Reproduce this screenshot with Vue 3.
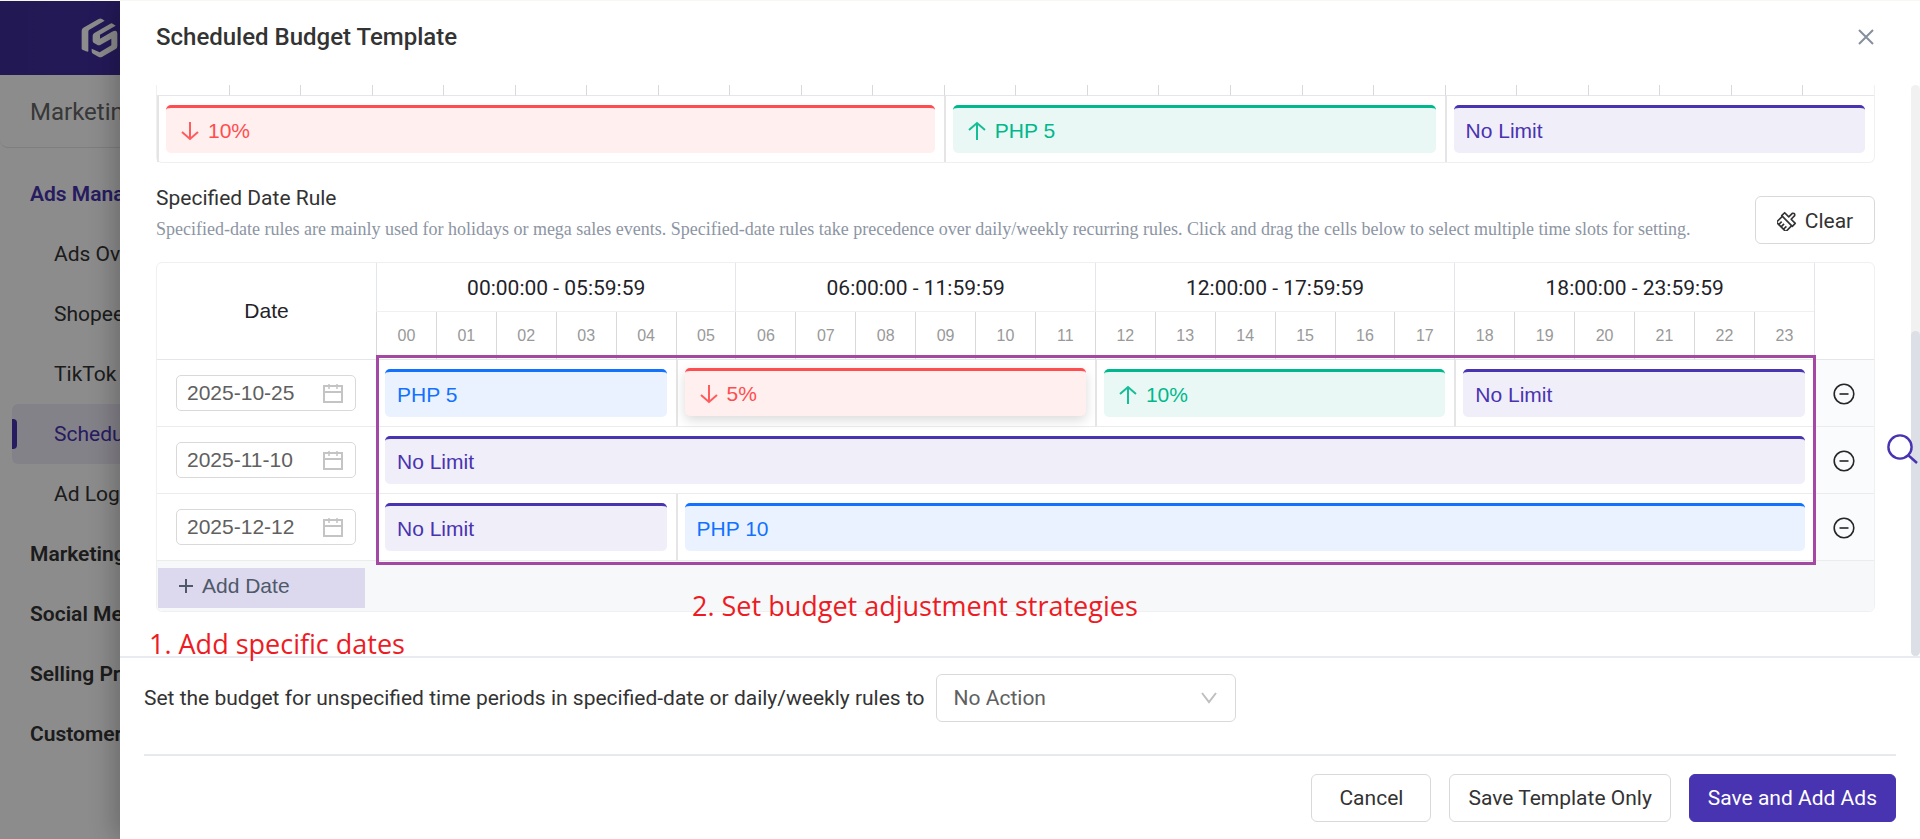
<script setup>
import { ref } from 'vue';

const menu = [
  { label: 'Ads Management', group: true, current: true },
  { label: 'Ads Overview' },
  { label: 'Shopee Ads' },
  { label: 'TikTok Ads' },
  { label: 'Scheduled Budget', active: true },
  { label: 'Ad Logs' },
  { label: 'Marketing Tools', group: true },
  { label: 'Social Media', group: true },
  { label: 'Selling Price', group: true },
  { label: 'Customer Service', group: true }
];

const ranges = [
  '00:00:00 - 05:59:59',
  '06:00:00 - 11:59:59',
  '12:00:00 - 17:59:59',
  '18:00:00 - 23:59:59'
];

const hours = Array.from({ length: 24 }, (_, i) => String(i).padStart(2, '0'));

const dailySlots = [
  { span: 11, type: 'down', text: '10%' },
  { span: 7, type: 'up', text: 'PHP 5' },
  { span: 6, type: 'unlimited', text: 'No Limit' }
];

const dateRules = ref([
  {
    date: '2025-10-25',
    slots: [
      { span: 5, type: 'fixed', text: 'PHP 5' },
      { span: 7, type: 'down', text: '5%', raised: true },
      { span: 6, type: 'up', text: '10%' },
      { span: 6, type: 'unlimited', text: 'No Limit' }
    ]
  },
  {
    date: '2025-11-10',
    slots: [{ span: 24, type: 'unlimited', text: 'No Limit' }]
  },
  {
    date: '2025-12-12',
    slots: [
      { span: 5, type: 'unlimited', text: 'No Limit' },
      { span: 19, type: 'fixed', text: 'PHP 10' }
    ]
  }
]);

const fallback = ref('none');

const addDate = () => {
  dateRules.value.push({
    date: '',
    slots: [{ span: 24, type: 'unlimited', text: 'No Limit' }]
  });
};

const removeDate = (index) => {
  dateRules.value.splice(index, 1);
};
</script>

<template>
  <div class="page">
    <aside class="sidebar">
      <div class="brand">
        <svg class="logo" viewBox="0 0 120 120" fill="#fff">
          <path d="M5 92V38Q5 32 10 29L56 3Q61 0 66 3L74 8L28 35Q25 37 25 41V100Q23 102 18 100L9 96Q5 95 5 92Z" />
          <path d="M43 45L91 17Q94 15 98 17L107 23L60 50V62L96 41Q112 33 112 46V83Q112 90 107 93L67 116Q61 119 55 116L39 107Q35 105 35 100V92L59 103L94 82V62L62 80Q56 83 51 80L42 75Q38 73 38 68V53Q38 48 43 45Z" />
        </svg>
      </div>
      <div class="module">Marketing</div>
      <nav class="menu">
        <a
          v-for="item in menu"
          :key="item.label"
          href="#"
          :class="{ group: item.group, current: item.current, active: item.active }"
        >{{ item.label }}</a>
      </nav>
    </aside>
    <div class="mask"></div>

    <section class="drawer" role="dialog" aria-labelledby="drawer-title">
      <header class="drawer-head">
        <h1 id="drawer-title">Scheduled Budget Template</h1>
        <button type="button" class="icon-btn close" aria-label="Close">
          <svg width="18" height="18" viewBox="0 0 18 18" stroke="#86909c" stroke-width="2">
            <path d="M2 2l14 14M16 2L2 16" />
          </svg>
        </button>
      </header>

      <div class="drawer-body">
        <div class="grid-box daily">
          <table>
            <thead>
              <tr>
                <th v-for="hour in hours" :key="hour" :aria-label="hour"></th>
              </tr>
            </thead>
            <tbody>
              <tr>
                <td v-for="(slot, i) in dailySlots" :key="i" :colspan="slot.span" class="slot">
                  <div class="tag" :class="slot.type">
                    <svg v-if="slot.type === 'down'" class="arrow" viewBox="0 0 24 24">
                      <path d="M12 3v17M4 13l8 7 8-7" />
                    </svg>
                    <svg v-if="slot.type === 'up'" class="arrow" viewBox="0 0 24 24">
                      <path d="M12 21V4M4 11l8-7 8 7" />
                    </svg>
                    <span>{{ slot.text }}</span>
                  </div>
                </td>
              </tr>
            </tbody>
          </table>
        </div>

        <div class="rule-head">
          <div>
            <h2>Specified Date Rule</h2>
            <p>Specified-date rules are mainly used for holidays or mega sales events. Specified-date rules take precedence over daily/weekly recurring rules. Click and drag the cells below to select multiple time slots for setting.</p>
          </div>
          <button type="button" class="btn clear">
            <svg width="20" height="20" viewBox="0 0 24 24" fill="none" stroke="currentColor" stroke-width="2" stroke-linejoin="round">
              <g transform="rotate(45 12 12)">
                <path d="M10 1Q12 -2 14 1V7H21V12H3V7H10Z" />
                <path d="M4 12V22H20V12M8 22V17M12 22V17M16 22V17" />
              </g>
            </svg>
            Clear
          </button>
        </div>

        <div class="grid-box dates">
          <table>
            <colgroup>
              <col class="col-date" />
              <col v-for="hour in hours" :key="hour" />
              <col class="col-action" />
            </colgroup>
            <thead>
              <tr class="ranges">
                <th rowspan="2" class="date-title">Date</th>
                <th v-for="range in ranges" :key="range" colspan="6">{{ range }}</th>
                <th rowspan="2" class="action-title"></th>
              </tr>
              <tr class="hours">
                <th v-for="hour in hours" :key="hour">{{ hour }}</th>
              </tr>
            </thead>
            <tbody>
              <tr v-for="(rule, index) in dateRules" :key="index">
                <td class="date-cell">
                  <label class="date-input">
                    <input v-model="rule.date" type="text" aria-label="Date" />
                    <svg width="20" height="20" viewBox="0 0 20 20" fill="none" stroke="#c4c4c4" stroke-width="2">
                      <path d="M1 3H19V19H1ZM1 9H19" />
                      <path d="M6 1V6M14 1V6" stroke-width="1.5" />
                    </svg>
                  </label>
                </td>
                <td v-for="(slot, i) in rule.slots" :key="i" :colspan="slot.span" class="slot">
                  <div class="tag" :class="[slot.type, { raised: slot.raised }]">
                    <svg v-if="slot.type === 'down'" class="arrow" viewBox="0 0 24 24">
                      <path d="M12 3v17M4 13l8 7 8-7" />
                    </svg>
                    <svg v-if="slot.type === 'up'" class="arrow" viewBox="0 0 24 24">
                      <path d="M12 21V4M4 11l8-7 8 7" />
                    </svg>
                    <span>{{ slot.text }}</span>
                  </div>
                </td>
                <td class="action-cell">
                  <button type="button" class="icon-btn" aria-label="Remove date" @click="removeDate(index)">
                    <svg width="22" height="22" viewBox="0 0 22 22" fill="none" stroke="#262626" stroke-width="1.6">
                      <circle cx="11" cy="11" r="9.8" />
                      <path d="M6.5 11h9" />
                    </svg>
                  </button>
                </td>
              </tr>
            </tbody>
          </table>
          <div class="add-row">
            <button type="button" @click="addDate">
              <svg width="16" height="16" viewBox="0 0 16 16" stroke="currentColor" stroke-width="2">
                <path d="M8 1V15M1 8H15" />
              </svg>
              Add Date
            </button>
          </div>
          <div class="highlight"></div>
        </div>
        <div class="scrollbar"><div class="thumb"></div></div>
      </div>

      <footer class="drawer-foot">
        <div class="fallback">
          <label for="fallback">Set the budget for unspecified time periods in specified-date or daily/weekly rules to</label>
          <div class="select">
            <select id="fallback" v-model="fallback">
              <option value="none">No Action</option>
            </select>
            <svg width="16" height="12" viewBox="0 0 16 12" fill="none" stroke="#bfbfbf" stroke-width="2">
              <path d="M1 1l7 9 7-9" />
            </svg>
          </div>
        </div>
        <div class="actions">
          <button type="button" class="btn cancel">Cancel</button>
          <button type="button" class="btn">Save Template Only</button>
          <button type="button" class="btn primary">Save and Add Ads</button>
        </div>
        <span class="note note-dates">1. Add specific dates</span>
        <span class="note note-budget">2. Set budget adjustment strategies</span>
      </footer>
    </section>

    <button type="button" class="icon-btn search" aria-label="Search">
      <svg width="32" height="32" viewBox="0 0 32 32" fill="none" stroke="#4833b0" stroke-width="2.4">
        <circle cx="14" cy="14" r="11.6" />
        <path d="M22 22l9 8" />
      </svg>
    </button>
  </div>
</template>

<style>
body {
  overflow: hidden;
}
</style>

<style scoped>
.page {
  position: relative;
  box-sizing: border-box;
  height: 100vh;
  border-top: 1px solid #f7f8f3;
  overflow: hidden;
  background: #fff;
  color: #333;
  font-family: Roboto, "Liberation Sans", sans-serif;
  font-size: 21px;
  line-height: 30px;
}

.page *,
.page *::before {
  box-sizing: border-box;
}

button,
input,
select {
  font: inherit;
  color: inherit;
}

/* app shell behind the drawer */
.sidebar {
  width: 320px;
  height: 100%;
}

.brand {
  height: 74px;
  padding: 17px 80px;
  background: linear-gradient(90deg, #3f2d99, #4833b0);
}

.logo {
  display: block;
  width: 40px;
  height: 40px;
}

.module {
  height: 73px;
  padding: 0 30px;
  border-bottom: 1px solid #e5e6eb;
  border-radius: 0 0 0 8px;
  color: #666;
  font-size: 24px;
  line-height: 74px;
}

.menu {
  display: flex;
  flex-direction: column;
  padding: 16px 12px;
}

.menu a {
  height: 60px;
  padding-left: 42px;
  border-radius: 6px;
  color: #333;
  line-height: 60px;
  text-decoration: none;
}

.menu a.group {
  padding-left: 18px;
  font-weight: 600;
}

.menu a.current {
  color: #4833b0;
}

.menu a.active {
  position: relative;
  background: #f0edf9;
  color: #4833b0;
}

.menu a.active::before {
  content: "";
  position: absolute;
  left: 0;
  top: 15px;
  width: 5px;
  height: 30px;
  border-radius: 0 4px 4px 0;
  background: #4833b0;
}

.mask {
  position: absolute;
  inset: 0;
  background: rgba(0, 0, 0, 0.45);
}

/* drawer */
.drawer {
  position: absolute;
  inset: 0 0 0 120px;
  display: flex;
  flex-direction: column;
  background: #fff;
  box-shadow: -6px 0 24px rgba(0, 0, 0, 0.24);
}

.drawer-head {
  display: flex;
  align-items: flex-start;
  justify-content: space-between;
  height: 84px;
  padding: 20px 42px 0 36px;
}

h1 {
  margin: 0;
  font-size: 24px;
  font-weight: 500;
  line-height: 32px;
}

.icon-btn {
  display: inline-flex;
  padding: 0;
  border: none;
  background: none;
}

.close {
  padding: 7px 3px;
}

.drawer-body {
  position: relative;
  flex: 1;
  min-height: 0;
  padding: 0 45px 0 36px;
  overflow: hidden;
}

.grid-box {
  position: relative;
  border: 1px solid #f0f0f0;
  border-radius: 6px;
}

.daily {
  border-top: none;
  border-radius: 0 0 6px 6px;
}

table {
  width: 100%;
  border-spacing: 0;
  table-layout: fixed;
}

th,
td {
  padding: 0;
  font-weight: 400;
}

.daily th {
  height: 11px;
  border-bottom: 1px solid #e5e6eb;
  border-left: 1px solid #d9d9d9;
}

.daily th:first-child {
  border-left: none;
}

.slot {
  height: 66px;
  padding: 9px 9px 9px 7px;
  border-left: 2px solid #e5e5e5;
}

.tag {
  display: flex;
  align-items: center;
  gap: 6px;
  height: 48px;
  padding: 0 12px;
  border-top: 3px solid;
  border-radius: 5px;
  font-family: "Liberation Sans", sans-serif;
}

.tag.down {
  border-color: #ff4d4f;
  background: #ffefee;
  color: #ff4d4f;
}

.tag.up {
  border-color: #00b88d;
  background: #e9f8f4;
  color: #00b88d;
}

.tag.fixed {
  border-color: #1272ff;
  background: #ebf2ff;
  color: #1272ff;
}

.tag.unlimited {
  border-color: #4833b0;
  background: #f0eef9;
  color: #4833b0;
}

.tag.raised {
  transform: translateY(-1px);
  box-shadow: 0 4px 12px rgba(0, 0, 0, 0.15);
}

.arrow {
  width: 24px;
  height: 24px;
  fill: none;
  stroke: currentColor;
  stroke-width: 2;
  opacity: 0.9;
}

.rule-head {
  display: flex;
  justify-content: space-between;
  margin: 20px 0 18px;
}

h2 {
  margin: 0;
  font-size: 21px;
  font-weight: 400;
  line-height: 30px;
}

.rule-head p {
  margin: 4px 0 0;
  color: #8c95a3;
  font-family: "Liberation Serif", serif;
  font-size: 18px;
  line-height: 24px;
}

.btn {
  display: inline-flex;
  align-items: center;
  justify-content: center;
  height: 48px;
  padding: 0 18px;
  border: 1px solid #d9d9d9;
  border-radius: 6px;
  background: #fff;
}

.clear {
  flex: none;
  gap: 8px;
  width: 120px;
  margin-top: 13px;
  padding-top: 2px;
}

.dates th {
  border-left: 1px solid #e5e6eb;
}

.ranges th {
  height: 49px;
  padding-top: 2px;
  border-bottom: 1px solid #f0f0f0;
  color: #1f2329;
}

.dates .date-title,
.dates .action-title {
  padding-top: 0;
  border-bottom: 1px solid #e5e6eb;
}

.dates .date-title {
  border-left: none;
}

.date-title,
.date-cell {
  font-family: "Liberation Sans", sans-serif;
}

.dates .hours th {
  height: 48px;
  border-left-color: #d9d9d9;
  border-bottom: 1px solid #e5e6eb;
  color: #999;
  font-family: "Liberation Sans", sans-serif;
  font-size: 16px;
}

.col-date {
  width: 219px;
}

.col-action {
  width: 60px;
}

.dates td {
  height: 67px;
  border-bottom: 1px solid #ececec;
}

.date-cell {
  padding-left: 19px;
}

.date-input {
  display: flex;
  align-items: center;
  width: 180px;
  height: 36px;
  padding: 0 12px 0 10px;
  border: 1px solid #d9d9d9;
  border-radius: 5px;
  color: #606060;
}

.date-input input {
  flex: 1;
  min-width: 0;
  padding: 0;
  border: none;
  outline: none;
  background: none;
}

.action-cell {
  background: #fafbfd;
  text-align: center;
}

.action-cell .icon-btn {
  vertical-align: middle;
}

.add-row {
  height: 50px;
  padding: 7px 1px 0;
  border-radius: 0 0 6px 6px;
  background: #f7f8fa;
}

.add-row button {
  display: flex;
  align-items: center;
  gap: 8px;
  width: 207px;
  height: 40px;
  padding: 0 20px 4px;
  border: none;
  background: #dcd8ee;
  color: #4e5969;
  font-family: "Liberation Sans", sans-serif;
}

/* guide marks over the table */
.highlight {
  position: absolute;
  inset: 92px 58px 46px 219px;
  border: 3px solid #a349a4;
  pointer-events: none;
}

.note {
  position: absolute;
  color: #ed1c24;
  font-family: "Open Sans", "Noto Sans", sans-serif;
  font-size: 27px;
  line-height: 36px;
  white-space: nowrap;
}

.note-dates {
  top: -32px;
  left: 29px;
}

.note-budget {
  top: -70px;
  left: 572px;
}

.scrollbar {
  position: absolute;
  top: 0;
  right: 0;
  bottom: 0;
  display: flex;
  align-items: flex-end;
  width: 9px;
  border-radius: 5px;
  background: #f1f1f1;
}

.thumb {
  width: 100%;
  height: 57%;
  border-radius: 5px;
  background: #dcdfe6;
}

.drawer-foot {
  position: relative;
  padding: 16px 24px 17px;
  border-top: 2px solid #e8ebf0;
}

.fallback {
  display: flex;
  align-items: center;
  gap: 11px;
  padding-bottom: 32px;
  border-bottom: 2px solid #e8e9ed;
}

.select {
  position: relative;
  width: 300px;
}

.select select {
  display: block;
  width: 100%;
  height: 48px;
  padding: 0 17px;
  border: 1px solid #d9d9d9;
  border-radius: 6px;
  appearance: none;
  background: #fff;
  color: #606060;
}

.select svg {
  position: absolute;
  top: 18px;
  right: 19px;
  pointer-events: none;
}

.actions {
  display: flex;
  justify-content: flex-end;
  gap: 18px;
  padding-top: 18px;
}

.cancel {
  width: 120px;
}

.primary {
  border-color: #4833b0;
  background: #4833b0;
  color: #fff;
}

.search {
  position: absolute;
  top: 432px;
  right: 2px;
}
</style>
